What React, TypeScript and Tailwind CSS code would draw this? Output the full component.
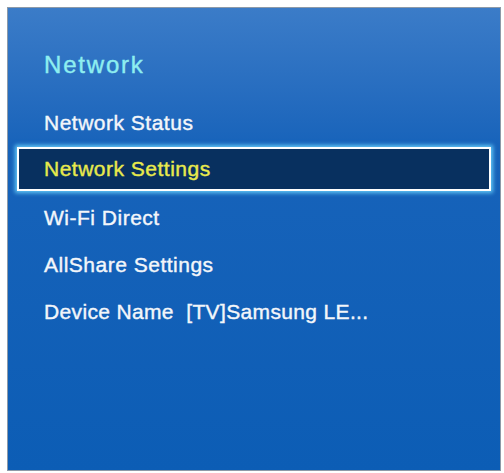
import React from "react";

export default function App() {
  const font = { fontFamily: '"Liberation Sans", Arial, sans-serif' };
  return (
    <div className="w-[504px] h-[473px] bg-white pt-[7px] pl-[7px]" style={font}>
      <div className="w-[494px] h-[464px] border border-[#8d9aa8] bg-gradient-to-b from-[#3b7cc8] via-[#1763ba] via-30% to-[#0c5db5] flex flex-col">
        <div className="pt-[43px] pl-[36px] h-[28px] box-content text-[24px] leading-[28px] tracking-[1.8px] text-[#8eeef0] [-webkit-text-stroke:0.4px_#8eeef0]">
          Network
        </div>
        <div className="mt-[20px] flex flex-col text-[21px] [-webkit-text-stroke:0.4px_currentColor]">
          <div className="h-[47px] flex items-center pl-[36px] tracking-[0.5px] text-[#f3f6fa]">
            Network Status
          </div>
          <div className="mt-px mx-[9px] h-[44px] border-[2px] border-white bg-[#08305f] shadow-[0_0_4px_2px_rgba(110,215,255,0.85)] flex items-center pl-[25px] tracking-[0.5px] text-[#e8ea4c]">
            Network Settings
          </div>
          <div className="mt-[3px] h-[47px] flex items-center pl-[36px] tracking-[0.5px] text-[#f3f6fa]">
            Wi-Fi Direct
          </div>
          <div className="h-[47px] flex items-center pl-[36px] tracking-[0.5px] text-[#f3f6fa]">
            AllShare Settings
          </div>
          <div className="h-[47px] flex items-center pl-[36px] tracking-[0.35px] text-[#f3f6fa] whitespace-pre">
            {"Device Name  [TV]Samsung LE..."}
          </div>
        </div>
      </div>
    </div>
  );
}
